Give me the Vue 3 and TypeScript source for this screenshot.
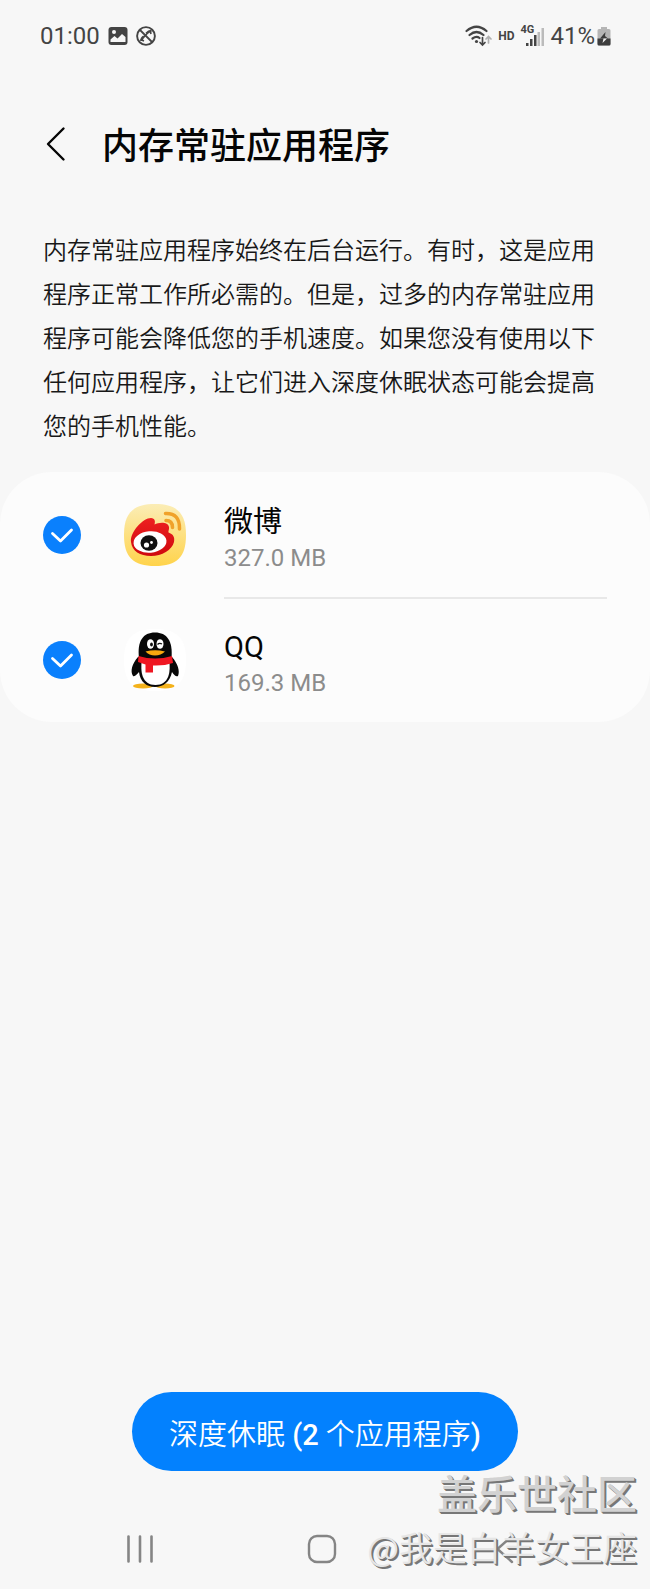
<script setup lang="ts">
import { computed, ref } from 'vue'

interface ResidentApp {
  id: string
  name: string
  size: string
  selected: boolean
}

const apps = ref<ResidentApp[]>([
  { id: 'weibo', name: '微博', size: '327.0 MB', selected: true },
  { id: 'qq', name: 'QQ', size: '169.3 MB', selected: true },
])

const selectedCount = computed(() => apps.value.filter((a) => a.selected).length)
</script>

<template>
  <div class="screen">
    <div class="status">
      <div class="status-group">
        <span class="clock">01:00</span>
        <svg class="status-icon" viewBox="0 0 20 20" aria-hidden="true">
          <rect x="0.5" y="1" width="19" height="18" rx="3" fill="#444" />
          <circle cx="6" cy="6" r="2" fill="#f7f7f7" />
          <path d="M2.500 16v-2.500l4-3.500 3 2.500 4.500-4.500 3.500 3v5z" fill="#f7f7f7" />
        </svg>
        <svg class="status-icon" viewBox="0 0 20 20" fill="none" stroke="#444" aria-hidden="true">
          <circle cx="10" cy="10" r="8.900" stroke-width="1.900" />
          <path d="M4 4l12 12" stroke-width="1.800" />
          <path d="M5.500 15q0-3 2.500-4.500M10.500 7.500q2-2.500 5-2.500" stroke-width="2.600" />
          <path d="M4.500 13.500l3.500 1.500M14 4.500l1 3.500M8 11l3.500-4" stroke-width="1.600" />
        </svg>
      </div>
      <div class="status-group right">
        <svg class="wifi" viewBox="0 0 27 22" fill="none" stroke="#444" stroke-width="2.200" stroke-linecap="round" aria-hidden="true">
          <path d="M1.500 6Q11.500-2.500 21.500 6M4.500 10Q11.500 4 18.500 10M7.500 13.500Q11.500 10.500 14.500 13" />
          <circle cx="11.500" cy="16.500" r="1.600" fill="#444" stroke="none" />
          <path d="M17.500 12.500v7M15 17.500l2.500 2.500 2.500-2.500" stroke-width="1.700" />
          <path d="M23.500 18v-6M21 14l2.500-2.500 2.500 2.500" stroke="#b0b0b0" stroke-width="1.700" />
        </svg>
        <span class="hd">HD</span>
        <span class="cell">
          <svg class="bars" viewBox="0 0 24 20" aria-hidden="true">
            <path d="M6 17h2.500v3H6zM10 13h2.500v7H10zM14 9h2.500v11H14z" fill="#444" />
            <path d="M17.500 6H20v14h-2.500zM21.500 2H24v18h-2.500z" fill="#bbb" />
          </svg>
          <span class="net">4G</span>
        </span>
        <span class="percent">41%</span>
        <svg class="battery" viewBox="0 0 14 20" aria-hidden="true">
          <path d="M4 1h6v2h2q1.500 0 1.500 1.500V18q0 1.500-1.500 1.500H2Q.5 19.500.5 18V4.500Q.5 3 2 3h2z" fill="#b5b5b5" />
          <path d="M.5 12.500h13V18q0 1.500-1.500 1.500H2Q.5 19.500.5 18z" fill="#3d3d3d" />
          <path d="M8.500 6L3 12.500h8L8 10z" fill="#3d3d3d" />
          <path d="M6.500 12.500h3.500L5.500 17z" fill="#f0f0f0" />
        </svg>
      </div>
    </div>

    <header class="header">
      <button class="back" type="button" aria-label="返回">
        <svg viewBox="0 0 20 36" fill="none" stroke="#050505" stroke-width="2.400" stroke-linecap="round" stroke-linejoin="round" aria-hidden="true">
          <path d="M17.500 2.500L2 18l15.500 15.500" />
        </svg>
      </button>
      <h1>内存常驻应用程序</h1>
    </header>

    <p class="intro">内存常驻应用程序始终在后台运行。有时，这是应用程序正常工作所必需的。但是，过多的内存常驻应用程序可能会降低您的手机速度。如果您没有使用以下任何应用程序，让它们进入深度休眠状态可能会提高您的手机性能。</p>

    <ul class="card">
      <li v-for="app in apps" :key="app.id">
        <label class="row">
          <input v-model="app.selected" class="tick" type="checkbox" />
          <span class="check" aria-hidden="true">
            <svg viewBox="0 0 38 38" fill="none" stroke="#fff" stroke-width="2.800" stroke-linecap="round" stroke-linejoin="round">
              <path d="M9.500 17.500l8 7.500 11-11" />
            </svg>
          </span>
          <svg v-if="app.id === 'weibo'" class="logo" viewBox="0 0 62 62" aria-hidden="true">
            <defs>
              <linearGradient id="gold" x1="0" y1="0" x2="0" y2="1">
                <stop offset="0" stop-color="#fbedb6" />
                <stop offset="1" stop-color="#ffd34b" />
              </linearGradient>
              <linearGradient id="flame" x1="0" y1="0" x2="0" y2="1">
                <stop offset="0" stop-color="#ed2020" />
                <stop offset="1" stop-color="#cf080e" />
              </linearGradient>
            </defs>
            <path d="M31 0C53 0 62 9 62 31S53 62 31 62 0 53 0 31 9 0 31 0z" fill="url(#gold)" />
            <path d="M7 38C6 28 19 14 27 14C31 14.500 31.500 17 30.500 20.500C35 18 44 17.500 45 23C45.500 25 44 27 44.500 28.500C49 30 51 33 50 38C48 46 38 52 27 52C16 52 8 47 7 38z" fill="url(#flame)" />
            <ellipse cx="26" cy="38" rx="16.500" ry="10.800" fill="#fff" transform="rotate(-5 26 38)" />
            <ellipse cx="25" cy="39" rx="8.500" ry="7.800" fill="#111" />
            <circle cx="22.500" cy="41" r="2.600" fill="#fff" />
            <circle cx="27.500" cy="38.500" r="1.400" fill="#fff" />
            <path d="M41.500 9.500Q56 9 55.500 25M42 16.500Q48.500 16.500 48.500 23.500" fill="none" stroke="#f0a22a" stroke-width="3.500" stroke-linecap="round" />
          </svg>
          <svg v-else class="logo" viewBox="0 0 62 62" aria-hidden="true">
            <path d="M31 0C53 0 62 9 62 31S53 62 31 62 0 53 0 31 9 0 31 0z" fill="#fff" />
            <ellipse cx="19" cy="57" rx="10" ry="2.500" fill="#f4b21b" />
            <ellipse cx="41" cy="57" rx="9.500" ry="2.500" fill="#f4b21b" />
            <path d="M14 28C8 35 6 42 9 47C11 48 13 45 15 43C16 53 23 58 31 58S46 53 48 43C50 46 52 48 54 47C56 42 54 35 48 28z" fill="#080808" />
            <path d="M18 30H45C47 43 45 56 31.500 56S16 43 18 30z" fill="#fff" />
            <path d="M15 29C13 12 19 3.500 31 3.500S49 12 47.500 29z" fill="#080808" />
            <ellipse cx="26.500" cy="15" rx="3.500" ry="4.800" fill="#fff" />
            <ellipse cx="36" cy="15" rx="3.500" ry="4.800" fill="#fff" />
            <ellipse cx="27.500" cy="15.500" rx="1.400" ry="2" fill="#111" />
            <path d="M33.500 15.500q2-2 4.500-.5" fill="none" stroke="#111" stroke-width="1.300" />
            <path d="M21.500 22.500Q31 20 41 22.500Q37 26.500 31 26.500T21.500 22.500z" fill="#f8a90f" />
            <path d="M14.500 27Q31 32 48 27L49 34Q40 37 29 36.500V43.500H21.500V35.500L14 33z" fill="#ef1722" />
          </svg>
          <span class="details">
            <span class="name">{{ app.name }}</span>
            <span class="size">{{ app.size }}</span>
          </span>
        </label>
      </li>
    </ul>

    <div class="action">
      <button class="sleep" type="button">深度休眠 <b>({{ selectedCount }}</b> 个应用程序<b>)</b></button>
    </div>

    <nav class="nav">
      <button type="button" aria-label="最近">
        <svg viewBox="0 0 30 30" fill="none" stroke="#858585" stroke-width="2.600" stroke-linecap="round" aria-hidden="true">
          <path d="M3.500 2.500v25M15 2.500v25M26.500 2.500v25" />
        </svg>
      </button>
      <button type="button" aria-label="主屏幕">
        <svg viewBox="0 0 30 30" fill="none" stroke="#858585" stroke-width="2.400" aria-hidden="true">
          <rect x="2" y="2" width="26" height="26" rx="8" />
        </svg>
      </button>
      <button type="button" aria-label="返回上一页">
        <svg viewBox="0 0 30 30" fill="none" stroke="#858585" stroke-width="2.400" stroke-linecap="round" stroke-linejoin="round" aria-hidden="true">
          <path d="M24 2L9.500 15 24 28" />
        </svg>
      </button>
    </nav>

    <div class="watermark">
      <span class="site">盖乐世社区</span>
      <span class="author">@我是白羊女王座</span>
    </div>
  </div>
</template>

<style>
body {
  background: #f7f7f7;
}
</style>

<style scoped>
.screen {
  position: relative;
  display: flex;
  flex-direction: column;
  box-sizing: border-box;
  min-height: 100vh;
  background: #f7f7f7;
  color: #050505;
  font-family: Roboto, "Noto Sans CJK SC", sans-serif;
}

button {
  padding: 0;
  border: 0;
  background: none;
  color: inherit;
  font: inherit;
  cursor: pointer;
}

svg {
  display: block;
}

.status {
  display: flex;
  align-items: center;
  justify-content: space-between;
  height: 72px;
  padding: 0 39px 0 40px;
  color: #444;
}

.status-group {
  display: flex;
  align-items: center;
  gap: 8px;
}

.right {
  gap: 6px;
}

.clock,
.percent {
  font-size: 24px;
  line-height: 28px;
}

.status-icon {
  width: 20px;
  height: 20px;
}

.wifi {
  width: 27px;
  height: 22px;
}

.hd {
  font-size: 12px;
  font-weight: 700;
}

.cell {
  position: relative;
}

.bars {
  width: 24px;
  height: 20px;
}

.net {
  position: absolute;
  top: -2px;
  left: 0;
  font-size: 11px;
  font-weight: 700;
  line-height: 12px;
}

.right .percent {
  margin-right: -4px;
}

.battery {
  width: 14px;
  height: 20px;
}

.header {
  display: flex;
  align-items: center;
  gap: 36px;
  height: 144px;
  padding: 0 46px;
}

h1 {
  margin: 0;
  padding-top: 6px;
  font-size: 36px;
  font-weight: 500;
  line-height: 52px;
}

.back svg {
  width: 20px;
  height: 36px;
}

.intro {
  margin: 13px 43px 0;
  color: #181818;
  font-size: 24px;
  font-weight: 350;
  line-height: 44px;
}

.card {
  margin: 23px 0 0;
  padding: 0;
  border-radius: 52px;
  background: #fcfcfc;
  list-style: none;
}

.row {
  display: flex;
  align-items: center;
  height: 125px;
  padding: 0 43px;
  cursor: pointer;
}

.tick {
  position: absolute;
  width: 38px;
  height: 38px;
  margin: 0;
  opacity: 0;
}

.check {
  width: 38px;
  height: 38px;
  border-radius: 50%;
  background: #c8c8c8;
}

.tick:checked + .check {
  background: #0a80fd;
}

.logo {
  width: 62px;
  height: 62px;
  margin: 0 38px 0 43px;
}

.details {
  display: flex;
  flex: 1;
  flex-direction: column;
  justify-content: center;
  box-sizing: border-box;
  height: 100%;
  padding-top: 8px;
}

li:not(:last-child) .details {
  box-shadow: 0 2px #e8e8e8;
}

.name {
  font-size: 29px;
  line-height: 38px;
}

.size {
  color: #8c8c8c;
  font-size: 24px;
  line-height: 34px;
}

.action {
  display: flex;
  justify-content: center;
  margin-top: auto;
}

.sleep {
  min-height: 79px;
  padding: 6px 37px 0;
  border-radius: 40px;
  background: #0381fe;
  color: #fff;
  font-size: 29px;
  font-weight: 350;
  line-height: 40px;
}

.sleep b {
  font-weight: 500;
}

.nav {
  display: flex;
  justify-content: space-between;
  height: 118px;
  padding: 37px 132px 0 125px;
  box-sizing: border-box;
}

.nav svg {
  width: 30px;
  height: 30px;
}

.watermark {
  position: absolute;
  right: 13px;
  bottom: 16px;
  display: flex;
  flex-direction: column;
  align-items: flex-end;
  color: #d2d2d2;
  text-shadow: 1px 1px #777, 2px 2px #777;
  pointer-events: none;
}

.site {
  font-size: 40px;
  font-weight: 500;
  line-height: 50px;
}

.author {
  color: #e6e6e6;
  font-family: "Noto Sans CJK SC", sans-serif;
  font-size: 34px;
  font-weight: 350;
  line-height: 52px;
}
</style>
